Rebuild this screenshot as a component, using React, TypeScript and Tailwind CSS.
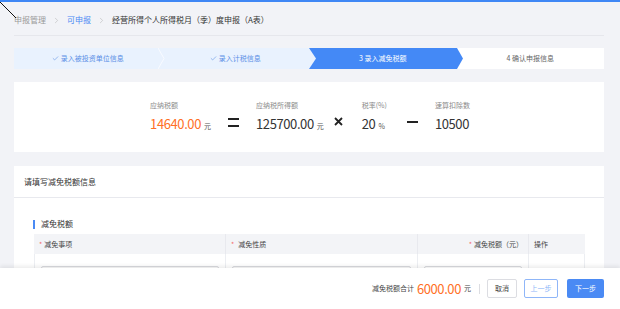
import { Check, ChevronRight } from 'lucide-react';

const font = "font-['Noto_Sans_CJK_SC','Noto_Sans',sans-serif]";

const Breadcrumb = () => (
  <div className="flex items-center gap-[6px] border-b border-[#e6e7ec] pb-[10px] text-[8px] leading-[10px]">
    <span className="text-[#9a9a9a]">申报管理</span>
    <ChevronRight size={9} strokeWidth={1.4} className="text-[#b0b0b0]" />
    <span className="text-[#4a8af4]">可申报</span>
    <ChevronRight size={9} strokeWidth={1.4} className="text-[#b0b0b0]" />
    <span className="text-[#333]">经营所得个人所得税月（季）度申报（A表）</span>
  </div>
);

const Steps = () => (
  <div className="mt-[12px] flex h-[21px] text-[7px]">
    <div className="relative flex flex-1 items-center justify-center gap-[2px] bg-[#e9f2fe] text-[#5b8fe6]">
      <Check size={7} strokeWidth={2} />
      <span>录入被投资单位信息</span>
      <svg className="absolute right-[-4px] top-0 z-10" width="8" height="21" viewBox="0 0 8 21">
        <polyline points="0,0 6,10.5 0,21" fill="none" stroke="#f8fbff" strokeWidth="1" />
      </svg>
    </div>
    <div className="relative flex flex-1 items-center justify-center gap-[2px] bg-[#e9f2fe] text-[#5b8fe6]">
      <Check size={7} strokeWidth={2} />
      <span>录入计税信息</span>
      <svg className="absolute right-[-7px] top-0 z-10" width="7" height="21" viewBox="0 0 7 21">
        <polygon points="0,0 7,10.5 0,21" fill="#e9f2fe" />
      </svg>
    </div>
    <div className="relative flex flex-1 items-center justify-center bg-[#4489f6] text-white">
      <span>3 录入减免税额</span>
      <svg className="absolute right-[-6px] top-0 z-10" width="6" height="21" viewBox="0 0 6 21">
        <polygon points="0,0 6,10.5 0,21" fill="#4489f6" />
      </svg>
    </div>
    <div className="flex flex-1 items-center justify-center bg-white text-[#666]">
      <span>4 确认申报信息</span>
    </div>
  </div>
);

const Item = ({ label, value, unit, orange }: { label: string; value: string; unit?: string; orange?: boolean }) => (
  <div className="flex flex-col">
    <span className="text-[7px] leading-[10px] text-[#8a8a8a]">{label}</span>
    <div className="mt-[6px] flex items-baseline">
      <span className={`text-[13px] leading-[16px] tracking-[-0.4px] ${orange ? 'text-[#ff7026]' : 'text-[#333]'}`}>{value}</span>
      {unit && <span className="ml-[3px] text-[7px] text-[#555]">{unit}</span>}
    </div>
  </div>
);

const Formula = () => (
  <div className="mt-[13px] flex h-[70px] items-start justify-center bg-white pt-[18px] pl-[2px]">
    <Item label="应纳税额" value="14640.00" unit="元" orange />
    <div className="ml-[17px] mr-[17px] mt-[18px] flex flex-col gap-[5px]">
      <div className="h-[2px] w-[11px] bg-[#222]" />
      <div className="h-[2px] w-[11px] bg-[#222]" />
    </div>
    <Item label="应纳税所得额" value="125700.00" unit="元" />
    <svg className="ml-[10px] mr-[19px] mt-[17px]" width="9" height="9" viewBox="0 0 9 9">
      <path d="M1 1 L8 8 M8 1 L1 8" stroke="#222" strokeWidth="1.8" />
    </svg>
    <Item label="税率(%)" value="20" unit="%" />
    <div className="ml-[20px] mr-[17px] mt-[21px] h-[2px] w-[11px] bg-[#222]" />
    <Item label="速算扣除数" value="10500" />
  </div>
);

const Th = ({ children, className = '' }: { children: React.ReactNode; className?: string }) => (
  <div className={`flex h-[20px] items-center border-r border-[#e8e9ee] px-[5px] text-[7px] text-[#444] ${className}`}>{children}</div>
);

const Star = () => <span className="mr-[2px] text-[#f56c6c]">*</span>;

const Table = () => (
  <div className="flex w-full flex-col">
    <div className="grid grid-cols-[192px_192px_111px_1fr] bg-[#f3f4f7]">
      <Th><Star />减免事项</Th>
      <Th><Star /><span className="ml-[2px]">减免性质</span></Th>
      <Th className="justify-end"><Star />减免税额（元）</Th>
      <Th className="border-r-0">操作</Th>
    </div>
    <div className="grid grid-cols-[192px_192px_111px_1fr] border-b border-[#e8e9ee]">
      <div className="border-x border-[#eceef2] px-[6px] pt-[12px] pb-[8px]">
        <div className="h-[20px] rounded-[2px] border border-[#d9dade] bg-[#fafafa]" />
      </div>
      <div className="border-r border-[#eceef2] px-[6px] pt-[12px] pb-[8px]">
        <div className="h-[20px] rounded-[2px] border border-[#d9dade] bg-[#fafafa]" />
      </div>
      <div className="border-r border-[#eceef2] px-[6px] pt-[12px] pb-[8px]">
        <div className="h-[20px] rounded-[2px] border border-[#d9dade] bg-white" />
      </div>
      <div className="border-r border-[#eceef2]" />
    </div>
  </div>
);

const Deduction = () => (
  <div className="mt-[14px] flex flex-col bg-white">
    <div className="flex h-[32px] items-center border-b border-[#e8e9ee] px-[10px] text-[8px] text-[#333]">
      请填写减免税额信息
    </div>
    <div className="flex flex-col px-[19px] pt-[20px]">
      <div className="flex items-center gap-[6px] text-[8px] text-[#333]">
        <div className="h-[9px] w-[2px] bg-[#4a8af4]" />
        <span>减免税额</span>
      </div>
      <div className="mt-[4px] pl-[1px]">
        <Table />
      </div>
    </div>
  </div>
);

const Footer = () => (
  <div className="absolute bottom-0 left-0 right-0 flex h-[41px] items-center justify-end bg-white pr-[16px] shadow-[0_-2px_4px_rgba(0,0,0,0.08)]">
    <span className="text-[7px] text-[#444]">减免税额合计</span>
    <span className="ml-[3px] text-[13px] leading-[16px] tracking-[-0.4px] text-[#ff7026]">6000.00</span>
    <span className="ml-[3px] text-[7px] text-[#444]">元</span>
    <div className="ml-[8px] h-[10px] w-px bg-[#dcdde2]" />
    <button className="ml-[7px] h-[19px] w-[30px] rounded-[2px] border border-[#dcdde2] bg-white text-[7px] text-[#444]">取消</button>
    <button className="ml-[7px] h-[19px] w-[34px] rounded-[2px] border border-[#8fb6f8] bg-white text-[7px] text-[#8fb6f8]">上一步</button>
    <button className="ml-[9px] h-[19px] w-[37px] rounded-[2px] bg-[#4a8af4] text-[7px] text-white">下一步</button>
  </div>
);

export default function App() {
  return (
    <div className={`relative h-[309px] w-[620px] overflow-hidden border-t-2 border-[#3f87f5] bg-[#f2f3f7] ${font}`}>
      <div className="flex flex-col pl-[14px] pr-[16px] pt-[13px]">
        <Breadcrumb />
        <Steps />
        <Formula />
        <Deduction />
      </div>
      <Footer />
      <svg className="absolute left-0 top-0" width="20" height="20" viewBox="0 0 20 20">
        <line x1="0" y1="0" x2="16" y2="16" stroke="#111" strokeWidth="1" />
      </svg>
    </div>
  );
}
